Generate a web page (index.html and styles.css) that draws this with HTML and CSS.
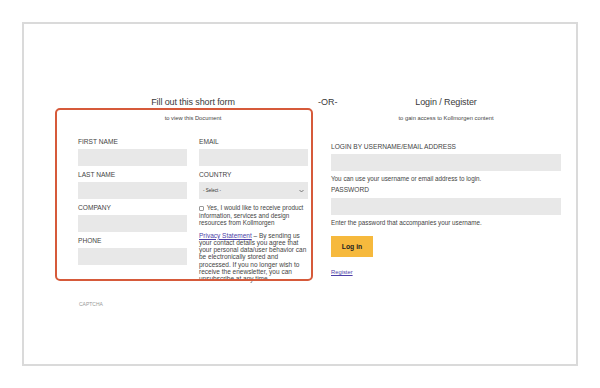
FILE: index.html
```html
<!DOCTYPE html>
<html lang="en">
<head>
  <meta charset="UTF-8" />
  <meta name="viewport" content="width=device-width, initial-scale=1.0"/>
  <title>Kollmorgen - Document Access</title>
  <link rel="stylesheet" href="styles.css">
</head>
<body>
  <div class="frame">
    <div class="columns">
      <div class="highlight"></div>

      <!-- left: short form -->
      <div class="col">
        <h2 class="title">Fill out this short form</h2>
        <p class="subtitle">to view this Document</p>

        <div class="form-grid">
          <div class="stack">
            <div class="field">
              <label>FIRST NAME</label>
              <div class="input"></div>
            </div>
            <div class="field">
              <label>LAST NAME</label>
              <div class="input"></div>
            </div>
            <div class="field">
              <label>COMPANY</label>
              <div class="input"></div>
            </div>
            <div class="field">
              <label>PHONE</label>
              <div class="input"></div>
            </div>
          </div>

          <div class="stack">
            <div class="field">
              <label>EMAIL</label>
              <div class="input"></div>
            </div>
            <div class="field">
              <label>COUNTRY</label>
              <div class="input select">
                <span>- Select -</span>
                <svg width="5" height="4" viewBox="0 0 10 6"><path d="M1 1l4 4 4-4" fill="none" stroke="#555" stroke-width="1.5"/></svg>
              </div>
            </div>
            <p class="small optin"><span class="box"></span> Yes, I would like to receive product information, services and design resources from Kollmorgen</p>
            <p class="small privacy"><a href="#">Privacy Statement</a> – By sending us your contact details you agree that your personal data/user behavior can be electronically stored and processed. If you no longer wish to receive the enewsletter, you can unsubscribe at any time.</p>
          </div>
        </div>

        <div class="captcha">CAPTCHA</div>
      </div>

      <div class="or">-OR-</div>

      <!-- right: login -->
      <div class="col">
        <h2 class="title">Login / Register</h2>
        <p class="subtitle">to gain access to Kollmorgen content</p>

        <div class="login">
          <label>LOGIN BY USERNAME/EMAIL ADDRESS</label>
          <div class="input"></div>
          <p class="help">You can use your username or email address to login.</p>

          <label class="pw">PASSWORD</label>
          <div class="input"></div>
          <p class="help">Enter the password that accompanies your username.</p>

          <button type="button">Log in</button>
          <a class="register" href="#">Register</a>
        </div>
      </div>
    </div>
  </div>
</body>
</html>
```

FILE: styles.css
```css
* {
  box-sizing: border-box;
  margin: 0;
  padding: 0;
}

body {
  background: #fff;
  font-family: 'Liberation Sans', Arial, sans-serif;
  color: #333;
}

.frame {
  margin: 22px 0 0 22px;
  width: 556px;
  height: 344px;
  border: 2px solid #dadada;
  padding: 72px 0 0 54px;
  overflow: hidden;
}

.columns {
  position: relative;
  display: grid;
  grid-template-columns: 230px 23px 230px;
}

.highlight {
  position: absolute;
  left: -23px;
  top: 12px;
  width: 258px;
  height: 173px;
  border: 2px solid #d65a3a;
  border-radius: 5px;
  z-index: 2;
  pointer-events: none;
}

.title {
  font-weight: normal;
  font-size: 9px;
  line-height: 12px;
  text-align: center;
  color: #3a3a3a;
  letter-spacing: -0.1px;
}

.or {
  font-size: 9px;
  line-height: 12px;
  margin-left: 10px;
  white-space: nowrap;
  color: #3a3a3a;
}

.subtitle {
  font-size: 5.8px;
  line-height: 8px;
  margin-top: 6px;
  text-align: center;
  color: #444;
}

label {
  display: block;
  font-size: 6.6px;
  line-height: 8px;
  color: #444;
}

.input {
  height: 17px;
  background: #e8e8e8;
}

/* short form */
.form-grid {
  display: grid;
  grid-template-columns: 109px 109px;
  column-gap: 12px;
  margin-top: 16px;
}

.field {
  margin-bottom: 5px;
}

.field label {
  margin-bottom: 3px;
}

.select {
  display: flex;
  align-items: center;
  justify-content: space-between;
  padding: 0 4px;
  font-size: 4.5px;
  color: #333;
}

.small {
  font-size: 6.3px;
  line-height: 7.5px;
  color: #444;
}

.optin {
  margin-top: 1.5px;
}

.box {
  display: inline-block;
  width: 5px;
  height: 5px;
  border: 0.6px solid #999;
  border-radius: 1px;
  vertical-align: -0.5px;
  margin-right: 1px;
}

.privacy {
  margin-top: 5px;
  font-size: 6.5px;
  line-height: 7.3px;
}

.privacy a {
  color: #4d3fa8;
}

.captcha {
  margin-top: 17px;
  font-size: 5px;
  line-height: 8px;
  color: #999;
  padding-left: 1px;
}

/* login */
.login {
  margin-top: 21px;
}

.login label {
  margin-bottom: 3px;
}

.help {
  font-size: 6.3px;
  line-height: 7px;
  margin-top: 3.5px;
  color: #444;
}

.pw {
  margin-top: 4.5px;
}

.login .pw {
  margin-bottom: 4px;
}

button {
  display: block;
  margin-top: 10.5px;
  width: 42px;
  height: 21px;
  background: #f6b93d;
  border: none;
  font-family: inherit;
  font-weight: bold;
  font-size: 6.8px;
  color: #222;
}

.register {
  display: inline-block;
  margin-top: 11px;
  font-size: 5.8px;
  line-height: 8px;
  color: #4d3fa8;
}
```
